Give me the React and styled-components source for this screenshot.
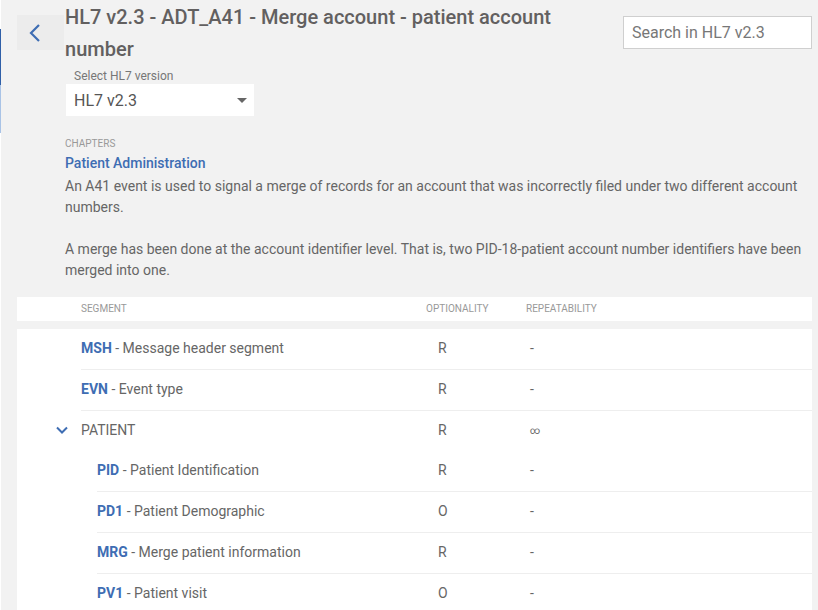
import styled, { createGlobalStyle } from "styled-components";

const GlobalStyle = createGlobalStyle`
  html, body {
    margin: 0;
    padding: 0;
    background: #f2f2f2;
    font-family: Roboto, "Liberation Sans", sans-serif;
    color: #666;
  }
`;

const BLUE = "#3e6db3";

const Shell = styled.div`
  display: flex;
  min-height: 610px;
  background: #f2f2f2;
`;

const SideEdge = styled.div`
  width: 1px;
  flex: none;
  background: #fff;
  display: flex;
  flex-direction: column;
  padding-top: 29px;
`;

const EdgeMark = styled.div`
  height: ${(p) => p.$h}px;
  background: ${(p) => p.$c};
`;

const Main = styled.div`
  flex: 1;
  padding: 0 6px 0 16px;
  min-width: 0;
`;

const Header = styled.div`
  display: flex;
  align-items: flex-start;
`;

const BackButton = styled.button`
  width: 47px;
  height: 35px;
  margin-top: 15px;
  border: none;
  background: #ececec;
  display: flex;
  align-items: center;
  justify-content: flex-start;
  padding: 0 0 0 11px;
  flex: none;
  cursor: pointer;
`;

const Title = styled.h1`
  flex: 1;
  margin: 1px 0 0 1px;
  font-size: 20px;
  line-height: 32px;
  font-weight: 500;
  color: #626060;
  max-width: 540px;
`;

const Search = styled.input`
  width: 189px;
  height: 33px;
  margin: 16px 0 0 auto;
  box-sizing: border-box;
  border: 1px solid #cfcfcf;
  background: #fff;
  padding: 0 8px;
  font-family: Roboto, "Liberation Sans", sans-serif;
  font-size: 16px;
  color: #666;
  outline: none;
  &::placeholder {
    color: #777;
  }
`;

const Content = styled.div`
  padding-left: 48px;
`;

const SelectWrap = styled.div`
  margin-top: 4px;
  margin-left: 1px;
  width: 188px;
`;

const SelectLabel = styled.div`
  font-size: 12px;
  line-height: 14px;
  color: #777;
  padding-left: 8px;
  margin-bottom: 1px;
`;

const SelectBox = styled.div`
  height: 32px;
  background: #fff;
  display: flex;
  align-items: center;
  justify-content: space-between;
  padding: 0 6px 0 8px;
  font-size: 16px;
  color: #555;
`;

const Caret = styled.span`
  width: 0;
  height: 0;
  border-left: 5px solid transparent;
  border-right: 5px solid transparent;
  border-top: 5px solid #666;
  margin-right: 1px;
`;

const SmallCaps = styled.div`
  font-size: 10px;
  line-height: 12px;
  text-transform: uppercase;
  color: #999;
`;

const Chapters = styled(SmallCaps)`
  margin-top: 22px;
`;

const ChapterLink = styled.a`
  display: block;
  margin-top: 4px;
  font-size: 14px;
  line-height: 18px;
  font-weight: 500;
  color: ${BLUE};
  text-decoration: none;
`;

const Description = styled.p`
  margin: 4px 0 0;
  font-size: 14px;
  line-height: 21px;
  color: #666;
  white-space: pre-line;
  max-width: 745px;
`;

const Table = styled.div`
  margin-top: 16px;
`;

const HeadBand = styled.div`
  display: flex;
  align-items: center;
  height: 24px;
  background: #fff;
  padding-left: 64px;
  margin-bottom: 8px;
`;

const Body = styled.div`
  background: #fff;
`;

const Row = styled.div`
  display: flex;
  height: ${(p) => (p.$last ? 40 : 41)}px;
`;

const Indent = styled.div`
  width: ${(p) => p.$w}px;
  flex: none;
  display: flex;
  align-items: center;
  justify-content: flex-end;
  padding: 0 13px 2px 0;
  box-sizing: border-box;
`;

const Cells = styled.div`
  flex: 1;
  display: flex;
  align-items: center;
  border-bottom: ${(p) => (p.$line ? "1px solid #eeeeee" : "none")};
  padding-bottom: 2px;
`;

const NameCell = styled.div`
  flex: 1;
  font-size: 14px;
  color: #666;
`;

const Code = styled.span`
  font-weight: 700;
  color: ${BLUE};
`;

const OptCell = styled.div`
  width: 100px;
  flex: none;
  padding-left: 12px;
  box-sizing: border-box;
  font-size: 14px;
`;

const RepCell = styled.div`
  width: 286px;
  flex: none;
  padding-left: 4px;
  box-sizing: border-box;
  font-size: ${(p) => (p.$small ? 10 : 14)}px;
`;

const HeadName = styled(SmallCaps)`
  flex: 1;
`;

const HeadCol = styled(SmallCaps)`
  width: ${(p) => p.$w}px;
  flex: none;
`;

const BackIcon = () => (
  <svg width="14" height="20" viewBox="0 0 14 20">
    <path d="M11 2 L3 10 L11 18" fill="none" stroke={BLUE} strokeWidth="2.2" />
  </svg>
);

const ChevronDown = () => (
  <svg width="12" height="8" viewBox="0 0 12 8">
    <path d="M1 1.5 L6 6.5 L11 1.5" fill="none" stroke={BLUE} strokeWidth="2" />
  </svg>
);

const rows = [
  { code: "MSH", name: "Message header segment", opt: "R", rep: "-", indent: 64, line: true },
  { code: "EVN", name: "Event type", opt: "R", rep: "-", indent: 64, line: true },
  { group: "PATIENT", opt: "R", rep: "∞", indent: 64, line: false },
  { code: "PID", name: "Patient Identification", opt: "R", rep: "-", indent: 80, line: true },
  { code: "PD1", name: "Patient Demographic", opt: "O", rep: "-", indent: 80, line: true },
  { code: "MRG", name: "Merge patient information", opt: "R", rep: "-", indent: 80, line: true },
  { code: "PV1", name: "Patient visit", opt: "O", rep: "-", indent: 80, line: true },
];

export default function App() {
  return (
    <>
      <GlobalStyle />
      <Shell>
        <SideEdge>
          <EdgeMark $h={56} $c="#2f5fa8" />
          <EdgeMark $h={48} $c="#a9c3e6" />
        </SideEdge>
        <Main>
          <Header>
            <BackButton aria-label="Back">
              <BackIcon />
            </BackButton>
            <Title>HL7 v2.3 - ADT_A41 - Merge account - patient account number</Title>
            <Search placeholder="Search in HL7 v2.3" />
          </Header>
          <Content>
            <SelectWrap>
              <SelectLabel>Select HL7 version</SelectLabel>
              <SelectBox>
                HL7 v2.3
                <Caret />
              </SelectBox>
            </SelectWrap>
            <Chapters>Chapters</Chapters>
            <ChapterLink href="#">Patient Administration</ChapterLink>
            <Description>
              {"An A41 event is used to signal a merge of records for an account that was incorrectly filed under two different account numbers.\n\nA merge has been done at the account identifier level. That is, two PID-18-patient account number identifiers have been merged into one."}
            </Description>
          </Content>
          <Table>
            <HeadBand>
              <HeadName>Segment</HeadName>
              <HeadCol $w={100}>Optionality</HeadCol>
              <HeadCol $w={286}>Repeatability</HeadCol>
            </HeadBand>
            <Body>
              {rows.map((r, i) => (
                <Row key={i} $last={!r.line}>
                  <Indent $w={r.indent}>{r.group && <ChevronDown />}</Indent>
                  <Cells $line={r.line}>
                    <NameCell>
                      {r.group ? (
                        r.group
                      ) : (
                        <>
                          <Code>{r.code}</Code> - {r.name}
                        </>
                      )}
                    </NameCell>
                    <OptCell>{r.opt}</OptCell>
                    <RepCell $small={r.rep === "∞"}>{r.rep}</RepCell>
                  </Cells>
                </Row>
              ))}
            </Body>
          </Table>
        </Main>
      </Shell>
    </>
  );
}
